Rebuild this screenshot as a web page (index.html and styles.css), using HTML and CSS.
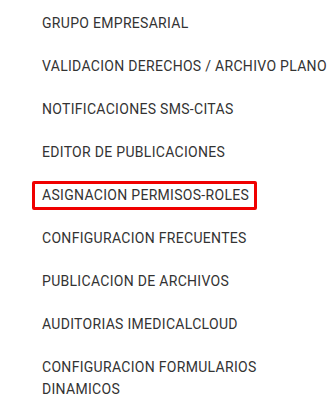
FILE: index.html
```html
<!DOCTYPE html>
<html lang="es">
<head>
<meta charset="utf-8">
<link rel="stylesheet" href="styles.css">
</head>
<body>
<ul class="menu">
  <li class="item">GRUPO EMPRESARIAL</li>
  <li class="item">VALIDACION DERECHOS / ARCHIVO PLANO</li>
  <li class="item">NOTIFICACIONES SMS-CITAS</li>
  <li class="item">EDITOR DE PUBLICACIONES</li>
  <li class="item"><span class="marked">ASIGNACION PERMISOS-ROLES</span></li>
  <li class="item">CONFIGURACION FRECUENTES</li>
  <li class="item">PUBLICACION DE ARCHIVOS</li>
  <li class="item">AUDITORIAS IMEDICALCLOUD</li>
  <li class="item">CONFIGURACION FORMULARIOS DINAMICOS</li>
</ul>
</body>
</html>
```
FILE: styles.css
```css
html, body {
  margin: 0;
  background: #ffffff;
}
body {
  font-family: Roboto, "Liberation Sans", sans-serif;
  font-size: 14px;
  letter-spacing: 0.3px;
  color: #333333;
}
.menu {
  list-style: none;
  margin: 0;
  padding: 1px 0 0 42px;
  width: 290px;
}
.item {
  line-height: 22px;
  padding: 10.5px 0;
}
.marked {
  position: relative;
}
.marked::after {
  content: "";
  position: absolute;
  top: -5.5px;
  bottom: -7.5px;
  left: -10px;
  right: -8px;
  border: 3px solid #f00000;
  border-radius: 2px;
}
```
